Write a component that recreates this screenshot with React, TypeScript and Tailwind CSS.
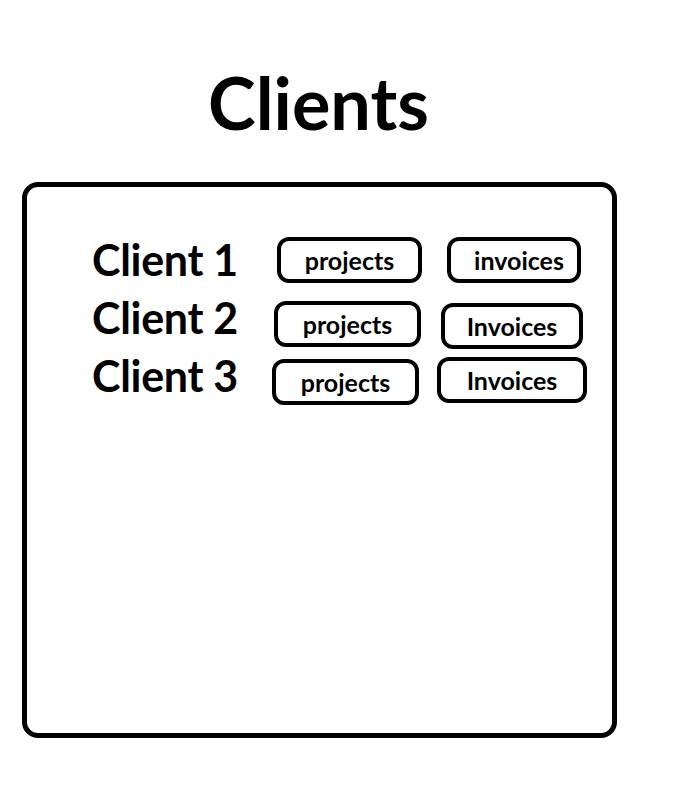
const clients = [
    { name: "Client 1", projects: "projects", invoices: "invoices", labelW: "w-[185px]", projW: "w-[145px]", invW: "w-[134px] ml-[25px] pl-[10px]" },
    { name: "Client 2", projects: "projects", invoices: "Invoices", labelW: "w-[182px]", projW: "w-[147px] mt-[6px]", invW: "w-[142px] ml-[20px] mt-[8px] h-[43px]" },
    { name: "Client 3", projects: "projects", invoices: "Invoices", labelW: "w-[180px]", projW: "w-[147px] mt-[6px]", invW: "w-[150px] ml-[18px] mt-[4px]" },
]

export default function App() {
    return (
        <div className="w-[695px] h-[806px] bg-white font-['Lato',sans-serif] text-black">
            <div className="w-[595px] ml-[22px] pt-[62px]">
                <h1 className="text-center text-[72px] font-[700] leading-[80px] pr-[2px]">Clients</h1>
                <div className="mt-[40px] h-[556px] border-[5px] border-black rounded-[16px] pl-[65px] pt-[50px]">
                    <div className="flex flex-col gap-[12px]">
                        {clients.map((item, index) => (
                            <ClientRow {...item} key={index} />
                        ))}
                    </div>
                </div>
            </div>
        </div>
    )
}

function ClientRow({ name, projects, invoices, labelW, projW, invW }: { name: string, projects: string, invoices: string, labelW: string, projW: string, invW: string }) {
    return (
        <div className="flex items-start h-[46px]">
            <p className={`${labelW} text-[43px] font-[700] leading-[46px] whitespace-nowrap tracking-[-0.3px]`}>{name}</p>
            <PillButton label={projects} className={projW} />
            <PillButton label={invoices} className={invW} />
        </div>
    )
}

function PillButton({ label, className }: { label: string, className?: string }) {
    return (
        <button className={`shrink-0 h-[46px] border-[4px] border-black rounded-[12px] bg-white text-[25px] font-[700] leading-[34px] text-center ${className ?? ""}`}>
            {label}
        </button>
    )
}
